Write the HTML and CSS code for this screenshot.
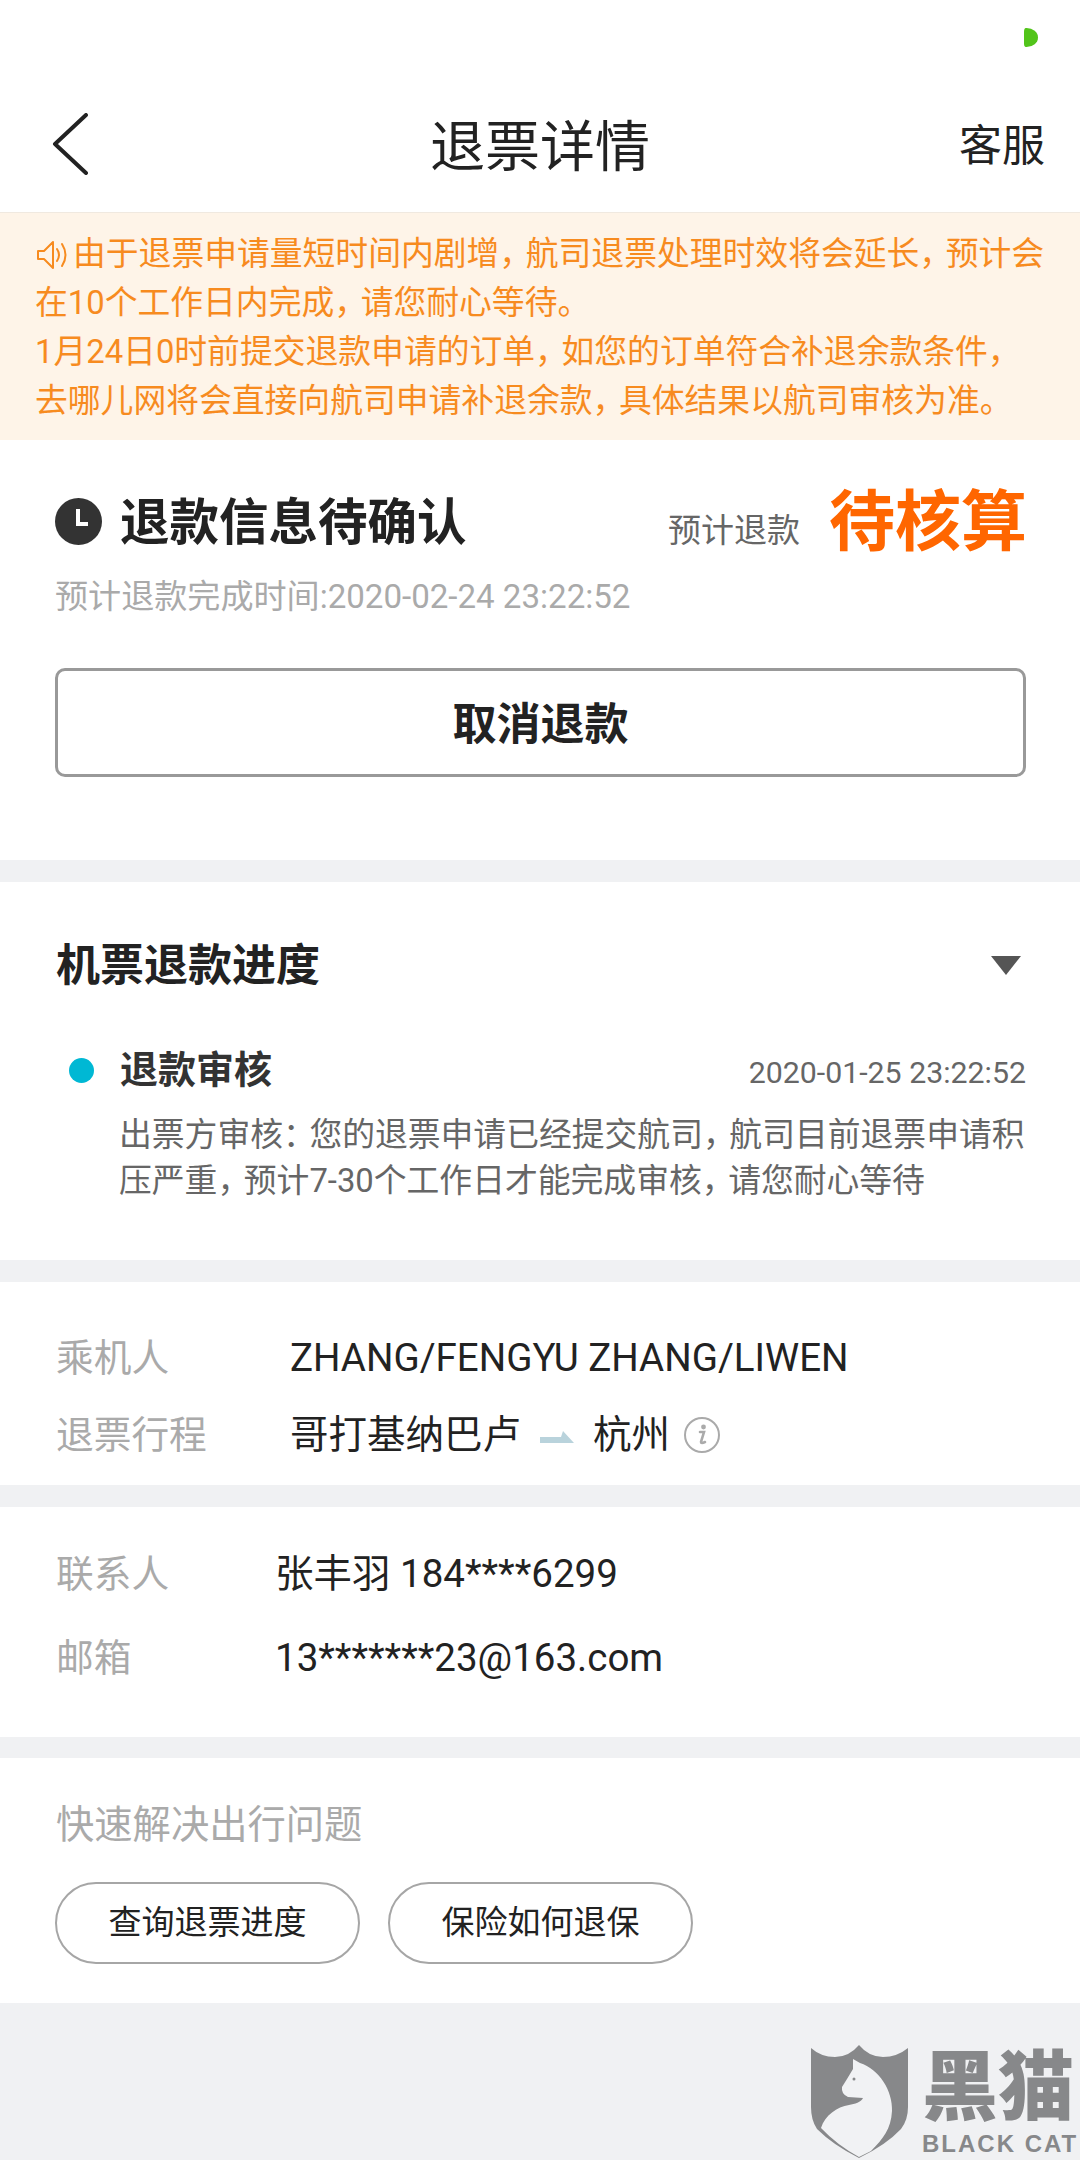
FILE: index.html
```html
<!DOCTYPE html>
<html lang="zh-CN">
<head>
<meta charset="utf-8">
<title>退票详情</title>
<link rel="stylesheet" href="styles.css">
</head>
<body>
<div class="page">
  <header class="header">
    <div class="status"><span class="status-dot"></span></div>
    <nav class="nav">
      <svg class="back" viewBox="0 0 36 62" width="36" height="62"><polyline points="34,2 3,31 34,60" fill="none" stroke="#222" stroke-width="4" stroke-linecap="round" stroke-linejoin="round"/></svg>
      <div class="nav-title">退票详情</div>
      <div class="nav-action">客服</div>
    </nav>
  </header>

  <section class="notice">
    <p><svg class="speaker" viewBox="0 0 34 30" width="34" height="30"><path d="M2 11 H8 L17 2 V28 L8 19 H2 Z" fill="none" stroke="#f78b1f" stroke-width="2" stroke-linejoin="round"/><path d="M21 9 Q25 15 21 21 M26 4 Q33 15 26 26" fill="none" stroke="#f78b1f" stroke-width="2" stroke-linecap="round"/></svg>由于退票申请量短时间内剧增<span class="cm">，</span>航司退票处理时效将会延长<span class="cm">，</span>预计会<br>在10个工作日内完成<span class="cm">，</span>请您耐心等待。</p>
    <p>1月24日0时前提交退款申请的订单<span class="cm">，</span>如您的订单符合补退余款条件<span class="cm">，</span><br>去哪儿网将会直接向航司申请补退余款<span class="cm">，</span>具体结果以航司审核为准。</p>
  </section>

  <section class="card refund">
    <div class="refund-head">
      <svg class="clock" viewBox="0 0 47 47" width="47" height="47"><circle cx="23.5" cy="23.5" r="23.5" fill="#333"/><path d="M23 11 V26 H33" fill="none" stroke="#fff" stroke-width="4"/></svg>
      <h1 class="refund-title">退款信息待确认</h1>
      <span class="refund-label">预计退款</span>
      <span class="refund-amount">待核算</span>
    </div>
    <p class="refund-sub">预计退款完成时间:2020-02-24 23:22:52</p>
    <button class="cancel"><span class="cancel-text">取消退款</span></button>
  </section>

  <section class="card progress">
    <div class="progress-head">
      <h2 class="progress-title">机票退款进度</h2>
      <span class="triangle"></span>
    </div>
    <div class="event">
      <span class="event-dot"></span>
      <span class="event-title">退款审核</span>
      <span class="event-time">2020-01-25 23:22:52</span>
    </div>
    <p class="event-desc">出票方审核<span class="cm">：</span>您的退票申请已经提交航司<span class="cm">，</span>航司目前退票申请积<br>压严重<span class="cm">，</span>预计7-30个工作日才能完成审核<span class="cm">，</span>请您耐心等待</p>
  </section>

  <section class="card passengers">
    <div class="row row-trip">
      <span class="label">乘机人</span>
      <span class="value">ZHANG/FENGYU ZHANG/LIWEN</span>
    </div>
    <div class="row row-trip">
      <span class="label">退票行程</span>
      <span class="value route">哥打基纳巴卢
        <svg class="route-arrow" viewBox="0 0 34 12" width="34" height="12"><path d="M0 6 H21 L23 0 L34 12 H0 Z" fill="#b9d3dc"/></svg>
        杭州
        <svg class="info" viewBox="0 0 36 36" width="36" height="36"><circle cx="18" cy="18" r="17" fill="none" stroke="#aaa" stroke-width="2"/><circle cx="19.5" cy="10" r="2.4" fill="#aaa"/><path d="M16 15 H20 L17 25 Q17 27 21 25" fill="none" stroke="#aaa" stroke-width="2.6" stroke-linecap="round"/></svg>
      </span>
    </div>
  </section>

  <section class="card contact">
    <div class="row row-contact">
      <span class="label">联系人</span>
      <span class="value">张丰羽 184****6299</span>
    </div>
    <div class="row row-contact">
      <span class="label">邮箱</span>
      <span class="value">13*******23@163.com</span>
    </div>
  </section>

  <section class="card quick">
    <h3 class="quick-title">快速解决出行问题</h3>
    <div class="quick-actions">
      <button class="pill"><span class="pill-text">查询退票进度</span></button>
      <button class="pill"><span class="pill-text">保险如何退保</span></button>
    </div>
  </section>

  <div class="watermark">
    <svg class="shield" viewBox="0 0 97 113" width="97" height="113">
      <path d="M0 3 Q10 12 24 12 Q38 12 48 0 Q58 12 72 12 Q86 12 97 3 L97 62 Q97 75 90 84 Q75 100 48 113 Q22 100 6 84 Q0 75 0 62 Z" fill="#87888a"/>
      <path d="M42 14 L49 18 C68 24 82 46 81 66 C80 84 72 94 60 106 L48 112 Q26 100 10 83 C14 70 26 62 38 60 C44 59 50 57 52 53 L37 52 Q30 49 31 42 L36 34 L42 24 Z" fill="#f1f2f4"/>
      <circle cx="43" cy="34" r="1.5" fill="#87888a"/>
    </svg>
    <div class="brand">
      <div class="brand-cn">黑猫</div>
      <div class="brand-en">BLACK CAT</div>
    </div>
  </div>
</div>
</body>
</html>
```
FILE: styles.css
```css
* { box-sizing: border-box; }
html, body { margin: 0; padding: 0; }
body {
  font-family: Roboto, "Noto Sans CJK SC", sans-serif;
  color: #222;
  background: #f0f1f3;
}
h1, h2, h3, p { margin: 0; font-weight: normal; }
button { font-family: inherit; background: #fff; padding: 0; color: #222; }
.page { position: relative; width: 1080px; height: 2160px; background: #f0f1f3; overflow: hidden; }
.cm { font-feature-settings: "halt"; margin-right: 10px; }

.header { background: #fff; height: 213px; border-bottom: 1px solid #f0e9e0; }
.status { height: 79px; padding: 28px 42px 0 0; display: flex; justify-content: flex-end; align-items: flex-start; }
.status-dot { width: 14px; height: 19px; background: #52c41a; border-radius: 2px 12px 12px 2px / 4px 10px 10px 4px; }
.nav { height: 133px; padding: 0 35px; display: grid; grid-template-columns: 1fr auto 1fr; align-items: center; }
.back { display: block; margin: -3px 0 0 17px; }
.nav-title { font-size: 55px; font-weight: 400; color: #222; line-height: 66px; padding-top: 3px; }
.nav-action { font-size: 43px; font-weight: 400; justify-self: end; line-height: 56px; }

.notice { background: #fef4e8; height: 227px; padding: 17px 35px 0; color: #f78b1f; font-size: 32.8px; line-height: 49px; white-space: nowrap; }
.speaker { vertical-align: -5px; margin: 0 3px 0 1px; }

.card { background: #fff; }
.refund { height: 420px; padding: 33px 53px 0 55px; margin-bottom: 22px; }
.refund-head { display: flex; align-items: center; height: 100px; }
.clock { flex: none; margin-top: -3px; }
.refund-title { font-size: 49.5px; font-weight: 700; margin-left: 18px; color: #222; line-height: 60px; }
.refund-label { margin-left: auto; font-size: 33px; color: #666; padding-top: 16px; line-height: 44px; }
.refund-amount { margin-left: 29px; font-size: 66px; font-weight: 700; color: #ff6600; line-height: 80px; }
.refund-sub { margin-top: 1px; font-size: 33.1px; line-height: 46px; color: #aaa; }
.cancel { display: block; width: 971px; height: 109px; margin-top: 48px; border: 3px solid #999; border-radius: 10px; font-size: 44px; font-weight: 700; }
.cancel-text { display: block; line-height: 56px; margin-top: 4px; }

.progress { height: 378px; padding: 61px 54px 0 56px; margin-bottom: 22px; }
.progress-head { display: flex; justify-content: space-between; align-items: center; height: 46px; }
.progress-title { font-size: 44px; font-weight: 700; line-height: 46px; }
.triangle { width: 0; height: 0; border-left: 15px solid transparent; border-right: 15px solid transparent; border-top: 19px solid #555; margin: -2px 5px 0 0; }
.event { display: flex; align-items: baseline; height: 50px; margin-top: 56px; line-height: 50px; }
.event-dot { align-self: center; width: 25px; height: 25px; border-radius: 50%; background: #00b8d4; margin: 0 26px 0 13px; }
.event-title { font-size: 38px; font-weight: 700; color: #333; }
.event-time { margin-left: auto; font-size: 30.3px; color: #666; }
.event-desc { margin: 17px 0 0 63px; font-size: 32.8px; line-height: 46px; color: #666; white-space: nowrap; }

.passengers { height: 203px; padding: 37px 0 0 56px; margin-bottom: 22px; }
.contact { height: 230px; padding: 25px 0 0 56px; margin-bottom: 21px; }
.row { display: flex; align-items: center; }
.row-trip { height: 77px; }
.row-contact { height: 84px; }
.label { flex: none; font-size: 37.7px; line-height: 50px; color: #aaa; }
.row-trip .label { width: 234px; }
.row-contact .label { width: 219px; }
.value { font-size: 38.5px; line-height: 50px; color: #222; }
.route { display: flex; align-items: center; gap: 19px; }
.route-arrow { margin-top: 4px; }
.info { margin-left: -5px; }

.quick { height: 245px; padding: 42px 0 0 55px; }
.quick-title { font-size: 38.3px; line-height: 50px; color: #aaa; margin-left: 1px; }
.quick-actions { display: flex; gap: 28px; margin-top: 32px; }
.pill { width: 305px; height: 82px; border: 2px solid #a6a6a6; border-radius: 41px; font-size: 33px; }
.pill-text { display: block; line-height: 44px; margin-top: -1px; }

.watermark { position: absolute; left: 811px; top: 2045px; display: flex; gap: 14px; }
.shield { display: block; }
.brand { color: #87888a; width: 158px; }
.brand-cn { font-family: "Liberation Sans", "Noto Sans CJK SC", sans-serif; font-size: 76px; font-weight: 900; line-height: 70px; margin-top: 8px; white-space: nowrap; }
.brand-en { font-family: "Liberation Sans", sans-serif; font-size: 24px; font-weight: 700; line-height: 24px; margin-top: 9px; letter-spacing: 2px; white-space: nowrap; }
```
